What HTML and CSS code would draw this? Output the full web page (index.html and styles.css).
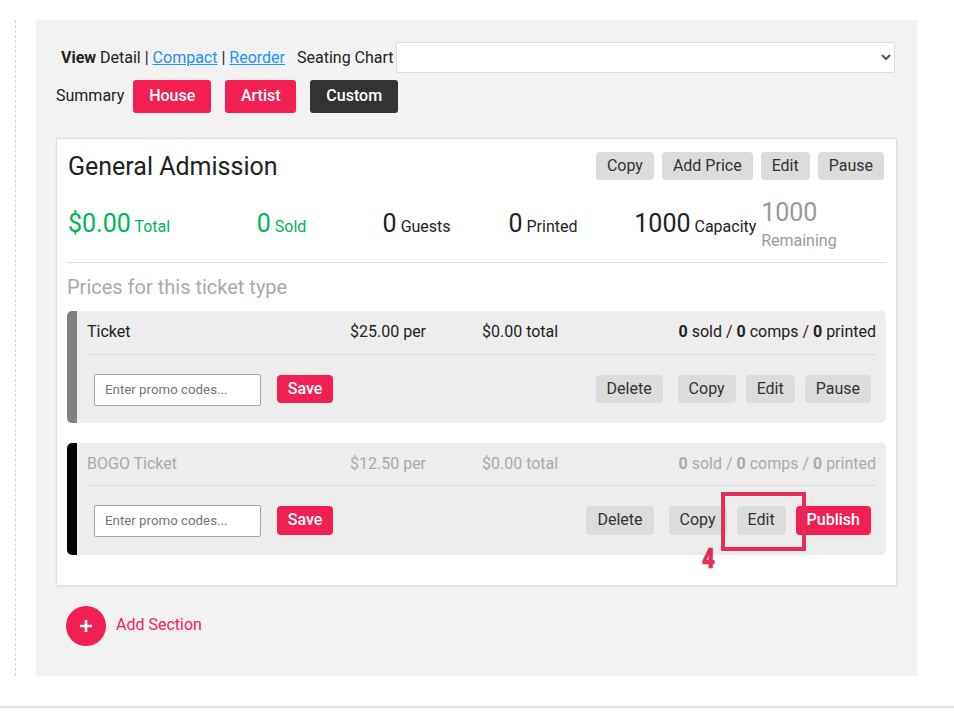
FILE: index.html
```html
<!DOCTYPE html>
<html lang="en">
<head>
<meta charset="utf-8">
<title>Tickets</title>
<link rel="stylesheet" href="styles.css">
</head>
<body>
<div class="page">
  <main class="panel">
    <div class="view-row">
      <span class="view-text"><b>View</b> Detail | <a href="#">Compact</a> | <a href="#">Reorder</a></span>
      <label class="seat-label">Seating Chart</label>
      <select class="seat-select"><option></option></select>
    </div>
    <div class="summary-row">
      <span class="summary-label">Summary</span>
      <button class="btn-big pink house">House</button>
      <button class="btn-big pink artist">Artist</button>
      <button class="btn-big dark custom">Custom</button>
    </div>
    <section class="card">
      <div class="card-head">
        <h2>General Admission</h2>
        <div class="head-actions">
          <button class="btn grey">Copy</button>
          <button class="btn grey">Add Price</button>
          <button class="btn grey">Edit</button>
          <button class="btn grey">Pause</button>
        </div>
      </div>
      <div class="stats">
        <div class="stat green"><span class="num">$0.00</span> <span class="lbl">Total</span></div>
        <div class="stat green"><span class="num">0</span> <span class="lbl">Sold</span></div>
        <div class="stat"><span class="num">0</span> <span class="lbl">Guests</span></div>
        <div class="stat"><span class="num">0</span> <span class="lbl">Printed</span></div>
        <div class="stat"><span class="num">1000</span> <span class="lbl">Capacity</span></div>
        <div class="stat remaining"><span class="num">1000</span><span class="lbl">Remaining</span></div>
      </div>
      <h3>Prices for this ticket type</h3>
      <div class="price live">
        <div class="price-head">
          <span>Ticket</span><span>$25.00 per</span><span>$0.00 total</span>
          <span class="counts"><b>0</b> sold / <b>0</b> comps / <b>0</b> printed</span>
        </div>
        <div class="price-body">
          <input class="promo" placeholder="Enter promo codes...">
          <button class="btn pink save">Save</button>
          <div class="price-actions">
            <button class="btn grey delete">Delete</button>
            <button class="btn grey">Copy</button>
            <button class="btn grey">Edit</button>
            <button class="btn grey">Pause</button>
          </div>
        </div>
      </div>
      <div class="price draft">
        <div class="price-head">
          <span>BOGO Ticket</span><span>$12.50 per</span><span>$0.00 total</span>
          <span class="counts"><b>0</b> sold / <b>0</b> comps / <b>0</b> printed</span>
        </div>
        <div class="price-body">
          <input class="promo" placeholder="Enter promo codes...">
          <button class="btn pink save">Save</button>
          <div class="price-actions">
            <button class="btn grey delete">Delete</button>
            <button class="btn grey">Copy</button>
            <button class="btn grey">Edit</button>
            <button class="btn pink">Publish</button>
          </div>
        </div>
        <div class="callout"></div>
        <div class="callout-num">4</div>
      </div>
    </section>
    <div class="add-section">
      <span class="add-circle"><svg width="14" height="14" viewBox="0 0 14 14"><path d="M7 1v12M1 7h12" stroke="#fff" stroke-width="2.6" fill="none"/></svg></span>
      <a href="#">Add Section</a>
    </div>
  </main>
</div>
<footer class="foot"></footer>
</body>
</html>
```
FILE: styles.css
```css
* { box-sizing: border-box; }
html, body { margin: 0; height: 711px; overflow: hidden; background: #fff; }
body { font-family: Roboto, "Liberation Sans", sans-serif; font-size: 16px; color: #222; }
.page { margin: 20px 0 0 15px; border-left: 1px dashed #d4d4d4; padding-left: 20px; height: 656px; }
.panel { width: 881px; height: 656px; background: #f2f2f2; padding: 22px 20px 0; }
button { font-family: inherit; border: 0; cursor: pointer; }

.view-row { display: flex; align-items: center; height: 31px; margin-right: 2px; padding-left: 5px; }
.view-text { white-space: nowrap; }
.view-text b { font-weight: 700; }
.view-text a { color: #1e90ff; text-decoration: underline; }
.seat-label { margin-left: 12px; margin-right: 2px; white-space: nowrap; }
.seat-select { flex: 1; height: 31px; border: 1px solid #dcdcdc; border-radius: 2px; background: #fff; font-size: 14px; color: #555; }

.summary-row { display: flex; align-items: center; margin-top: 7px; height: 33px; }
.summary-label { margin-right: 9px; padding-bottom: 2px; }
.btn-big { height: 33px; border-radius: 3px; color: #fff; font-size: 16px; font-weight: 500; padding: 0 0 2px; margin-right: 14px; }
.house { width: 78px; }
.artist { width: 71px; }
.custom { width: 88px; }
.pink { background: #f21f52; color: #fff; }
.dark { background: #333; color: #fff; }

.card { width: 841px; height: 448px; margin-top: 25px; background: #fff; border: 1px solid #dedede; box-shadow: 0 1px 2px rgba(0,0,0,.08); padding: 13px 10px 0; }
.card-head { display: flex; justify-content: space-between; align-items: flex-start; margin-right: 2px; margin-left: 1px; }
h2 { margin: 0; font-size: 25px; font-weight: 400; line-height: 30px; color: #222; }
.head-actions { display: flex; gap: 8px; }
.btn { height: 28px; padding: 0 11px 2px; border-radius: 4px; font-size: 16px; }
.grey { background: #dcdcdc; color: #333; }

.stats { display: grid; grid-template-columns: 1.5fr 1fr 1fr 1fr 1fr 1fr; margin: 13px 0 0; height: 68px; border-bottom: 1px solid #ddd; padding-left: 1px; }
.stat { white-space: nowrap; padding-top: 14px; line-height: 30px; }
.num { font-size: 25px; }
.lbl { font-size: 16px; color: inherit; }
.green { color: #00b45a; }
.remaining { color: #999; display: flex; flex-direction: column; padding-top: 0; padding-left: 1px; }
.remaining .num { line-height: 30px; margin-top: 3px; }
.remaining .lbl { line-height: 26px; }

h3 { margin: 11px 0 0; font-size: 20px; font-weight: 400; line-height: 26px; color: #aaa; }

.price { position: relative; height: 112px; width: 819px; background: #ededed; border-left: 10px solid #808080; border-radius: 5px; padding: 0 10px; margin-top: 11px; }
.price.draft { border-left-color: #000; margin-top: 20px; }
.price-head { display: grid; grid-template-columns: 263px 132px 1fr auto; height: 44px; align-items: center; border-bottom: 1px solid #dcdcdc; padding-bottom: 3px; }
.draft .price-head { color: #aaa; height: 43px; padding-bottom: 2px; }
.counts b { font-weight: 700; }
.price-body { display: flex; align-items: flex-start; padding: 19px 5px 0 7px; }
.promo { width: 167px; height: 32px; border: 1px solid #a6a6a6; border-radius: 2px; background: #fff; padding: 0 10px 1px; font-family: Roboto, sans-serif; font-size: 13.3px; }
.promo::placeholder { color: #757575; opacity: 1; }
.save { margin: 1px 0 0 16px; width: 56px; padding: 0 0 2px; font-weight: 500; }
.price-actions { margin-left: auto; margin-top: 1px; display: flex; gap: 10px; }
.price-actions .delete { margin-right: 5px; }
.draft .btn { height: 29px; }
.draft .pink:not(.save) { font-weight: 500; }

.callout { position: absolute; left: 644px; top: 49px; width: 85px; height: 59px; border: 4px solid #e32c57; }
.callout-num { position: absolute; left: 625px; top: 101px; font-weight: 900; font-size: 27px; line-height: 30px; color: #e32c57; transform: scaleX(.82); transform-origin: left center; -webkit-text-stroke: .7px #e32c57; }

.add-section { display: flex; align-items: center; margin: 20px 0 0 10px; height: 40px; }
.add-circle { width: 40px; height: 40px; border-radius: 50%; background: #f21f52; display: flex; align-items: center; justify-content: center; }
.add-section a { margin-left: 10px; color: #f21f52; text-decoration: none; margin-top: -3px; }

.foot { margin-top: 30px; border-top: 2px solid #e4e4e4; height: 5px; }
```
